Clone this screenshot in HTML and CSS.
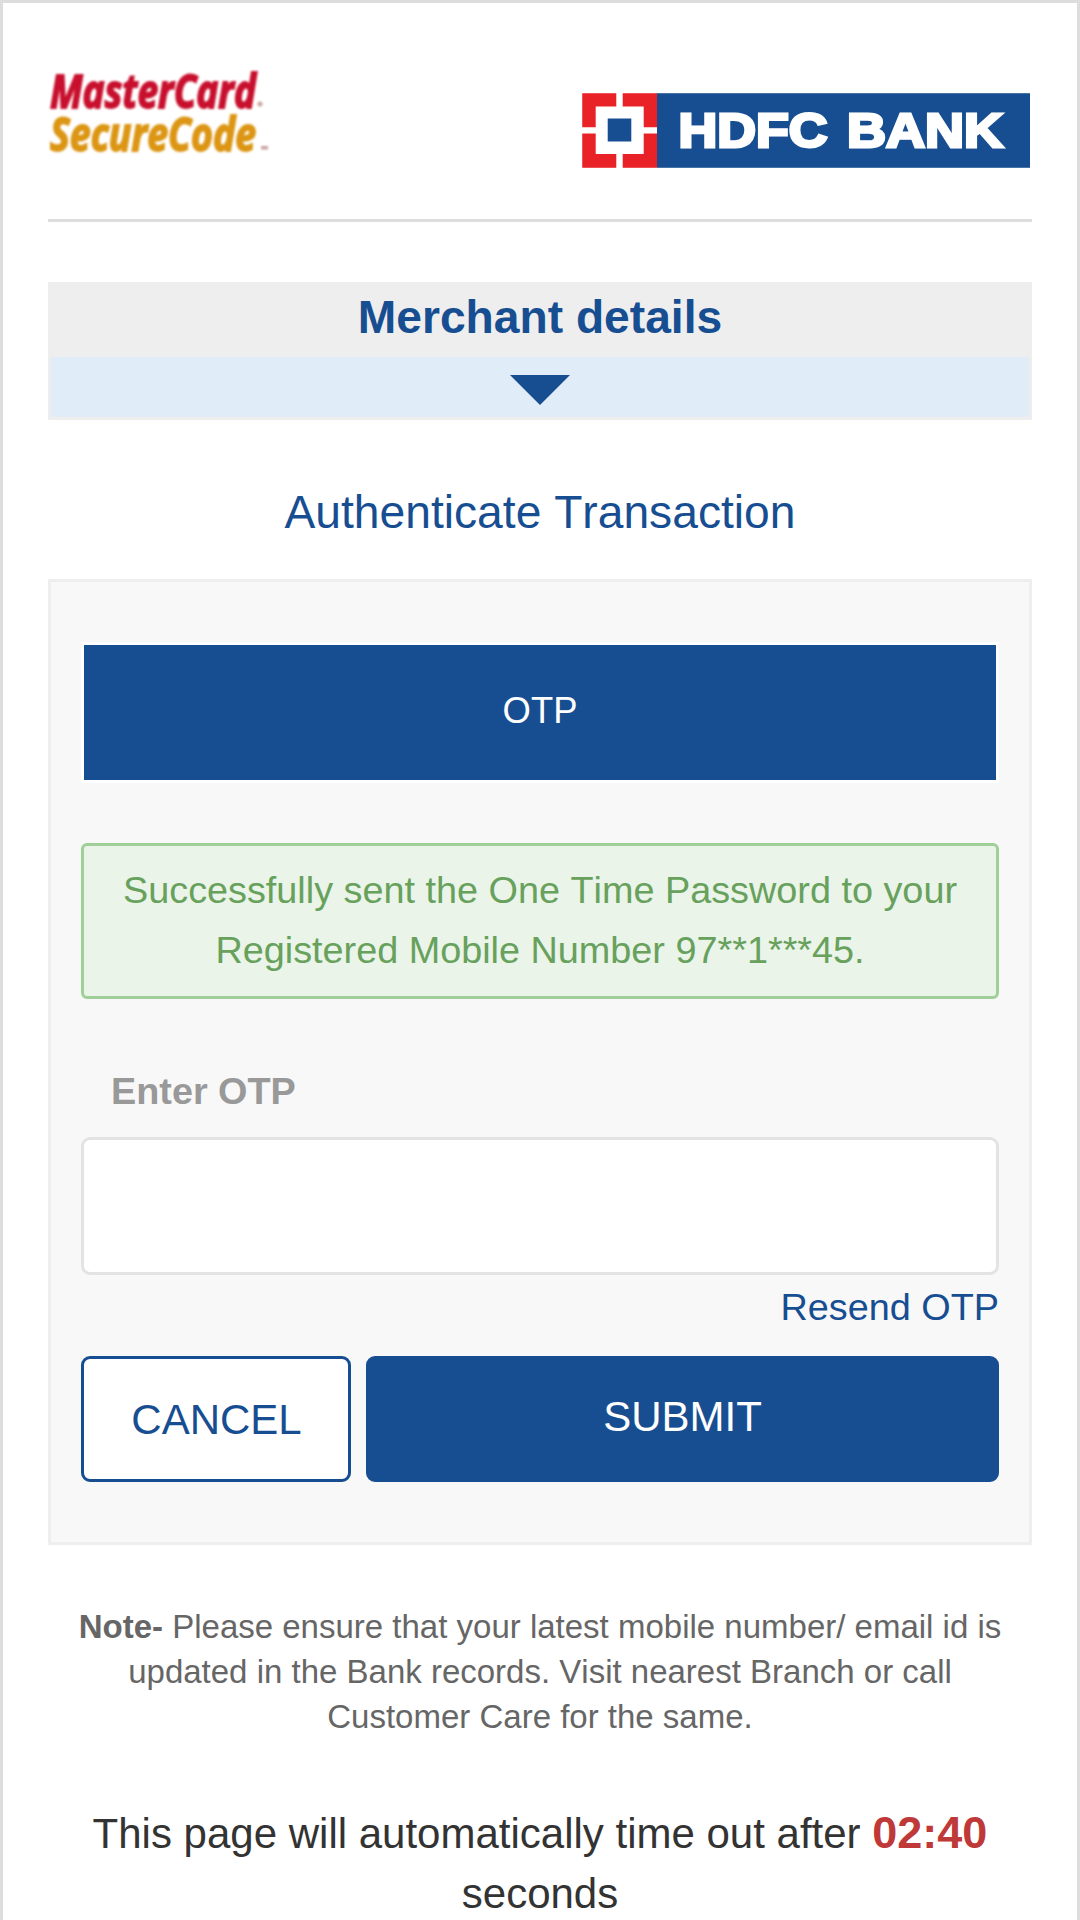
FILE: index.html
```html
<!DOCTYPE html>
<html lang="en">
<head>
<meta charset="utf-8">
<title>Authenticate Transaction</title>
<link rel="stylesheet" href="styles.css">
</head>
<body>
<main class="page">
  <header class="header">
    <svg class="securecode" viewBox="0 0 225 92" role="img" aria-label="MasterCard SecureCode">
      <text class="sc-red" x="2" y="45" textLength="206" lengthAdjust="spacingAndGlyphs">MasterCard</text>
      <circle class="sc-mark" cx="212" cy="41" r="2.5"/>
      <text class="sc-gold" x="2" y="87.500" textLength="206" lengthAdjust="spacingAndGlyphs">SecureCode</text>
      <rect class="sc-mark" x="213" y="83" width="7" height="3.500"/>
    </svg>
    <svg class="hdfc" viewBox="0 0 448 75" role="img" aria-label="HDFC Bank">
      <rect width="448" height="75" fill="#174e92"/>
      <rect width="75" height="75" fill="#e92227"/>
      <path d="M34.300 0h6.400v75h-6.400zM0 34.200h75v6.200H0z" fill="#fff"/>
      <rect x="13.700" y="13.500" width="48" height="47.500" fill="#fff"/>
      <rect x="25.700" y="25.500" width="23.600" height="23" fill="#174e92"/>
      <path d="M0 .5h448M0 74.500h448M.5 0v75" stroke="#fff" stroke-opacity=".22"/>
      <text class="hdfc-name" x="96.500" y="54" textLength="149" lengthAdjust="spacingAndGlyphs">HDFC</text>
      <text class="hdfc-name" x="265" y="54" textLength="156" lengthAdjust="spacingAndGlyphs">BANK</text>
    </svg>
  </header>

  <section class="merchant">
    <h2 class="merchant-title">Merchant details</h2>
    <div class="merchant-toggle"><span class="caret"></span></div>
  </section>

  <h1 class="title">Authenticate Transaction</h1>

  <form class="panel">
    <div class="tab">OTP</div>
    <p class="success">Successfully sent the One Time Password to your Registered Mobile Number 97**1***45.</p>
    <label class="label" for="otp">Enter OTP</label>
    <input class="input" id="otp" type="text">
    <a class="resend">Resend OTP</a>
    <div class="actions">
      <button class="btn cancel" type="button">CANCEL</button>
      <button class="btn submit" type="button">SUBMIT</button>
    </div>
  </form>

  <p class="note"><b>Note-</b> Please ensure that your latest mobile number/ email id is updated in the Bank records. Visit nearest Branch or call Customer Care for the same.</p>
  <p class="timeout">This page will automatically time out after <b class="time">02:40</b> seconds</p>
</main>
</body>
</html>
```
FILE: styles.css
```css
* { box-sizing: border-box; margin: 0; padding: 0; }

body {
  background: #fff;
  font-family: "Nimbus Sans", "Liberation Sans", Arial, sans-serif;
  font-size: 42px;
  line-height: 60px;
  font-kerning: none;
  color: #333;
}

.page {
  height: 1920px;
  overflow: hidden;
  padding: 0 45px;
  border: 3px solid #ddd;
  border-bottom: 0;
}

.header {
  display: flex;
  justify-content: space-between;
  height: 219px;
  padding: 60px 2px 0 0;
  border-bottom: 3px solid #ddd;
}
.securecode { width: 225px; height: 92px; overflow: visible; filter: blur(0.9px); }
.securecode text { font: italic 700 47px "Open Sans", sans-serif; stroke-width: 1.8px; }
.sc-red { fill: #c8102e; stroke: #c8102e; }
.sc-gold { fill: #dc9614; stroke: #dc9614; }
.sc-mark { fill: #c9a3a0; }
.hdfc { width: 448px; height: 75px; margin-top: 30px; }
.hdfc-name {
  font: 700 49px "Liberation Sans", Arial, sans-serif;
  fill: #fff;
  stroke: #fff;
  stroke-width: 3px;
}

.merchant {
  margin-top: 60px;
  border: 3px solid #eee;
  text-align: center;
}
.merchant-title {
  height: 72px;
  background: #eee;
  color: #174e92;
  font-size: 46.2px;
  line-height: 65px;
}
.merchant-toggle {
  display: flex;
  justify-content: center;
  height: 60px;
  padding-top: 18px;
  background: #e0edf9;
}
.caret {
  width: 0;
  height: 0;
  border: 30px solid transparent;
  border-top-color: #174e92;
  border-bottom: 0;
}

.title {
  margin: 62px 0 37px;
  color: #174e92;
  font-size: 46.2px;
  font-weight: 400;
  text-align: center;
}

.panel {
  display: flex;
  flex-direction: column;
  height: 966px;
  padding: 60px 30px;
  border: 3px solid #eee;
  background: #f8f8f8;
  font-size: 37.8px;
}
.tab {
  height: 141px;
  border: 3px solid #fff;
  background: #174e92;
  color: #fff;
  font-size: 36.4px;
  line-height: 131px;
  text-align: center;
}
.success {
  height: 156px;
  margin-top: 60px;
  padding: 14px 20px;
  border: 3px solid #a1cf9a;
  border-radius: 6px;
  background: #eaf4e9;
  color: #67a15c;
  text-align: center;
}
.label {
  margin: 62px 0 16px 30px;
  color: #999;
  font-weight: 700;
}
.input {
  width: 100%;
  height: 138px;
  padding: 0 30px;
  border: 3px solid #e3e3e3;
  border-radius: 9px;
  background: #fff;
  font: inherit;
}
.resend {
  align-self: flex-end;
  margin: 2px 0 19px;
  color: #174e92;
}
.actions {
  display: grid;
  grid-template-columns: 270px 1fr;
  gap: 15px;
  height: 126px;
}
.btn {
  border: 3px solid #174e92;
  border-radius: 9px;
  font: 42px/60px "Nimbus Sans", "Liberation Sans", Arial, sans-serif;
  font-kerning: none;
}
.cancel { background: #fff; color: #174e92; padding: 2px 0 0 1px; }
.submit { background: #174e92; color: #fff; padding-bottom: 5px; }

.note {
  margin-top: 59px;
  padding: 0 24px;
  color: #666;
  font-size: 33px;
  line-height: 45px;
  text-align: center;
}
.timeout {
  margin-top: 65px;
  text-align: center;
}
.time {
  color: #bf3939;
  font-size: 45px;
  line-height: 1px;
}
```
